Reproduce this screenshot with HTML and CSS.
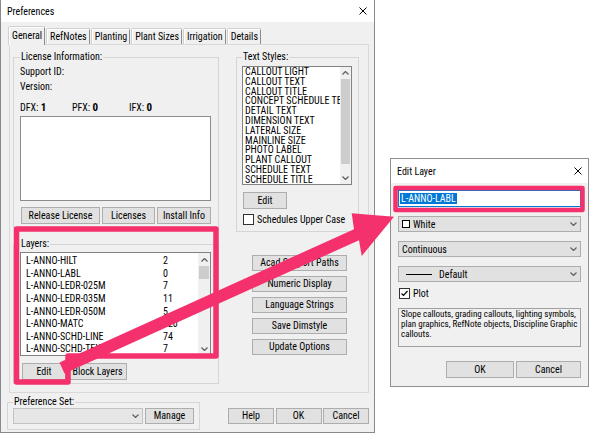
FILE: index.html
```html
<!DOCTYPE html>
<html lang="en">
<head>
<meta charset="utf-8">
<title>Preferences</title>
<link rel="stylesheet" href="styles.css">
</head>
<body>
<div class="desktop">
  <section class="win prefs">
    <header class="titlebar">
      <span class="title">Preferences</span>
      <svg class="close" width="8" height="8" viewBox="0 0 8 8"><path d="M0.5 0.5L7.5 7.5M7.5 0.5L0.5 7.5" stroke="#000" stroke-width="1" fill="none"/></svg>
    </header>
    <div class="client">
      <nav class="tabs">
        <span class="tab active">General</span>
        <span class="tab">RefNotes</span>
        <span class="tab">Planting</span>
        <span class="tab">Plant Sizes</span>
        <span class="tab">Irrigation</span>
        <span class="tab">Details</span>
      </nav>
      <div class="panel">
        <div class="col col-left">
          <fieldset class="group license">
            <legend>License Information:</legend>
            <div class="info">Support ID:</div>
            <div class="info">Version:</div>
            <div class="counts">
              <span>DFX: <b>1</b></span>
              <span>PFX: <b>0</b></span>
              <span>IFX: <b>0</b></span>
            </div>
            <div class="textbox"></div>
            <div class="btnrow">
              <button class="btn b-release">Release License</button>
              <button class="btn b-licenses">Licenses</button>
              <button class="btn b-install">Install Info</button>
            </div>
          </fieldset>
          <fieldset class="group layers">
            <legend>Layers:</legend>
            <div class="listbox layerlist">
              <div class="items">
                <div class="row"><span>L-ANNO-HILT</span><span>2</span></div>
                <div class="row"><span>L-ANNO-LABL</span><span>0</span></div>
                <div class="row"><span>L-ANNO-LEDR-025M</span><span>7</span></div>
                <div class="row"><span>L-ANNO-LEDR-035M</span><span>11</span></div>
                <div class="row"><span>L-ANNO-LEDR-050M</span><span>5</span></div>
                <div class="row"><span>L-ANNO-MATC</span><span>120</span></div>
                <div class="row"><span>L-ANNO-SCHD-LINE</span><span>74</span></div>
                <div class="row"><span>L-ANNO-SCHD-TEXT</span><span>7</span></div>
              </div>
              <div class="vscroll">
                <div class="arr"><svg width="7" height="4" viewBox="0 0 7 4"><path d="M0.5 3.5L3.5 0.5L6.5 3.5" stroke="#606060" stroke-width="1.3" fill="none"/></svg></div>
                <div class="track"><div class="thumb"></div></div>
                <div class="arr"><svg width="7" height="4" viewBox="0 0 7 4"><path d="M0.5 0.5L3.5 3.5L6.5 0.5" stroke="#606060" stroke-width="1.3" fill="none"/></svg></div>
              </div>
            </div>
            <div class="btnrow">
              <button class="btn b-edit">Edit</button>
              <button class="btn b-block">Block Layers</button>
            </div>
          </fieldset>
        </div>
        <div class="col col-right">
          <fieldset class="group styles">
            <legend>Text Styles:</legend>
            <div class="listbox stylelist">
              <div class="items">
                <div class="item">CALLOUT LIGHT</div>
                <div class="item">CALLOUT TEXT</div>
                <div class="item">CALLOUT TITLE</div>
                <div class="item">CONCEPT SCHEDULE TEXT</div>
                <div class="item">DETAIL TEXT</div>
                <div class="item">DIMENSION TEXT</div>
                <div class="item">LATERAL SIZE</div>
                <div class="item">MAINLINE SIZE</div>
                <div class="item">PHOTO LABEL</div>
                <div class="item">PLANT CALLOUT</div>
                <div class="item">SCHEDULE TEXT</div>
                <div class="item">SCHEDULE TITLE</div>
              </div>
              <div class="vscroll">
                <div class="arr"><svg width="7" height="4" viewBox="0 0 7 4"><path d="M0.5 3.5L3.5 0.5L6.5 3.5" stroke="#606060" stroke-width="1.3" fill="none"/></svg></div>
                <div class="track"><div class="thumb"></div></div>
                <div class="arr"><svg width="7" height="4" viewBox="0 0 7 4"><path d="M0.5 0.5L3.5 3.5L6.5 0.5" stroke="#606060" stroke-width="1.3" fill="none"/></svg></div>
              </div>
            </div>
            <button class="btn b-edit s-edit">Edit</button>
            <label class="checkrow upper"><span class="chk"></span>Schedules Upper Case</label>
          </fieldset>
          <div class="btncol">
            <button class="btn b-side">Acad Support Paths</button>
            <button class="btn b-side">Numeric Display</button>
            <button class="btn b-side">Language Strings</button>
            <button class="btn b-side">Save Dimstyle</button>
            <button class="btn b-side">Update Options</button>
          </div>
        </div>
      </div>
      <div class="footer">
        <fieldset class="group prefset">
          <legend>Preference Set:</legend>
          <div class="setrow">
            <div class="combo c-set"><svg class="chev" width="7" height="4" viewBox="0 0 7 4"><path d="M0.5 0.5L3.5 3.5L6.5 0.5" stroke="#606060" stroke-width="1.2" fill="none"/></svg></div>
            <button class="btn b-manage">Manage</button>
          </div>
        </fieldset>
        <div class="dlgbtns">
          <button class="btn b-dlg">Help</button>
          <button class="btn b-dlg">OK</button>
          <button class="btn b-dlg">Cancel</button>
        </div>
      </div>
    </div>
  </section>

  <section class="win editlayer">
    <header class="titlebar">
      <span class="title">Edit Layer</span>
      <svg class="close" width="8" height="8" viewBox="0 0 8 8"><path d="M0.5 0.5L7.5 7.5M7.5 0.5L0.5 7.5" stroke="#000" stroke-width="1" fill="none"/></svg>
    </header>
    <div class="dlgbody">
      <div class="field"><span class="sel">L-ANNO-LABL</span></div>
      <div class="combo c-layer"><span class="swatch"></span><span class="ctext">White</span><svg class="chev" width="7" height="4" viewBox="0 0 7 4"><path d="M0.5 0.5L3.5 3.5L6.5 0.5" stroke="#606060" stroke-width="1.2" fill="none"/></svg></div>
      <div class="combo c-layer"><span>Continuous</span><svg class="chev" width="7" height="4" viewBox="0 0 7 4"><path d="M0.5 0.5L3.5 3.5L6.5 0.5" stroke="#606060" stroke-width="1.2" fill="none"/></svg></div>
      <div class="combo c-layer"><span class="lw"></span><span class="ctext dflt">Default</span><svg class="chev" width="7" height="4" viewBox="0 0 7 4"><path d="M0.5 0.5L3.5 3.5L6.5 0.5" stroke="#606060" stroke-width="1.2" fill="none"/></svg></div>
      <label class="checkrow plot"><span class="chk"><svg width="9" height="9" viewBox="0 0 9 9"><path d="M1.5 4.5L3.5 6.5L7.5 2" stroke="#000" stroke-width="1.2" fill="none"/></svg></span>Plot</label>
      <div class="desc">Slope callouts, grading callouts, lighting symbols,<br>plan graphics, RefNote objects, Discipline Graphic<br>callouts.</div>
      <div class="okrow">
        <button class="btn b-ok">OK</button>
        <button class="btn b-cancel">Cancel</button>
      </div>
    </div>
  </section>

  <svg class="callouts" width="589" height="434" viewBox="0 0 589 434">
    <path d="M16.5 229H216V356H68V382H16.5Z" fill="none" stroke="#f4306d" stroke-width="5.5" stroke-linejoin="round"/>
    <rect x="395.5" y="188" width="187" height="22" fill="none" stroke="#f4306d" stroke-width="4.5" stroke-linejoin="round"/>
    <polygon points="59.5,362.5 354,229.2 351.7,213.3 394,216.7 361.7,256 359,240.2 64.5,373.5" fill="#f4306d"/>
  </svg>
</div>
</body>
</html>
```

FILE: styles.css
```css
* { box-sizing: border-box; }
html, body { margin: 0; padding: 0; }
body {
  width: 589px;
  height: 434px;
  overflow: hidden;
  background: #fff;
  font-family: "Roboto Condensed", "Liberation Sans Narrow", "Arial Narrow", Roboto, "Liberation Sans", sans-serif;
  font-stretch: 75%;
  font-size: 10px;
  color: #000;
}
.desktop { position: relative; width: 589px; height: 434px; }

.win {
  position: absolute;
  display: flex;
  flex-direction: column;
  background: #f0f0f0;
  white-space: nowrap;
}
.titlebar {
  flex: none;
  display: flex;
  align-items: center;
  justify-content: space-between;
  background: #fff;
}
.close { display: block; }

/* ---------- Preferences window ---------- */
.prefs {
  left: 0;
  top: 0;
  width: 375px;
  height: 433px;
  border: 1px solid #8a8a8a;
  border-top: 0;
}
.prefs .titlebar { height: 22px; padding: 0 7px 0 6px; }
.prefs .title { font-size: 10px; }

.client { flex: 1; display: flex; flex-direction: column; padding-top: 5px; }

.tabs {
  display: flex;
  align-items: flex-end;
  gap: 2px;
  height: 17px;
  margin-left: 8px;
  position: relative;
  z-index: 1;
}
.tab {
  height: 15px;
  line-height: 13px;
  padding: 0 2px;
  border: 1px solid;
  border-color: #fff #8c8c8c transparent #fff;
  border-bottom: 0;
  background: #f0f0f0;
  box-shadow: -1px 0 0 #d0d0d0, 0 -1px 0 #d0d0d0;
}
.tab.active { height: 18px; line-height: 15px; margin-bottom: -1px; }

.panel {
  margin-left: 8px;
  width: 360px;
  height: 349px;
  border: 1px solid #d9d9d9;
  display: flex;
  gap: 17px;
  padding: 6px 0 0 3px;
}
.col { display: flex; flex-direction: column; }
.col-left { width: 206px; }
.col-right { width: 123px; }

fieldset.group {
  margin: 0;
  border: 1px solid #d5d5d5;
  min-width: 0;
}
legend { padding: 0 1px; line-height: 12px; }

fieldset.license { padding: 1px 7px 3px 6px; }
.info { line-height: 15px; }
.counts {
  margin-top: 7px;
  line-height: 14px;
  display: grid;
  grid-template-columns: 52px 57px auto;
}
.counts b { font-size: 11px; }
.textbox {
  margin-top: 1px;
  height: 85px;
  border: 1px solid #8c8c8c;
  background: #fff;
}
.btnrow { display: flex; gap: 2px; }
.license .btnrow { margin-top: 6px; margin-left: 1px; }

.btn {
  font: inherit;
  color: #000;
  height: 17px;
  padding: 0;
  line-height: 15px;
  text-align: center;
  border: 1px solid #adadad;
  background: #e1e1e1;
  white-space: nowrap;
  flex: none;
}
.b-release { width: 79px; }
.b-licenses { width: 53px; }
.b-install { width: 54px; }
.b-edit { width: 44px; }
.b-block { width: 59px; }

fieldset.layers { margin-top: 10px; padding: 2px 7px 3px 6px; }
.layers .btnrow { margin-top: 7px; margin-left: 2px; }

.listbox {
  display: flex;
  border: 1px solid #828282;
  background: #fff;
  overflow: hidden;
}
.items { flex: 1; overflow: hidden; min-width: 0; }
.layerlist { height: 104px; }
.layerlist .items { padding: 2px 0 0 5px; }
.row {
  display: grid;
  grid-template-columns: 137px auto;
  height: 12.65px;
  line-height: 12.65px;
}
.vscroll {
  flex: none;
  display: flex;
  flex-direction: column;
  background: #f0f0f0;
}
.arr {
  flex: none;
  height: 13px;
  display: flex;
  align-items: center;
  justify-content: center;
}
.arr svg { display: block; }
.track { flex: 1; }
.thumb { background: #cdcdcd; margin: 0 1px; }
.layerlist .vscroll { width: 12px; }
.layerlist .thumb { height: 13px; }

fieldset.styles { padding: 3px 6px 5px 5px; }
.stylelist { height: 119px; }
.stylelist .items { padding-left: 2px; }
.item { height: 9.8px; line-height: 9.8px; }
.stylelist .vscroll { width: 11px; }
.stylelist .arr { height: 12px; }
.stylelist .thumb { height: 85px; }
.s-edit { margin-top: 7px; margin-left: 1px; }

.checkrow { display: flex; align-items: center; gap: 3px; height: 13px; }
.chk {
  width: 11px;
  height: 11px;
  border: 1px solid #333;
  background: #fff;
  display: flex;
  align-items: center;
  justify-content: center;
  flex: none;
}
.chk svg { display: block; }
.upper { margin-top: 4px; margin-left: 1px; }

.btncol {
  margin-top: 23px;
  margin-left: 16px;
  display: flex;
  flex-direction: column;
  gap: 5px;
}
.b-side { width: 95px; height: 16px; line-height: 14px; }

.footer { display: flex; margin-top: 3px; }
fieldset.prefset { margin-left: 6px; width: 193px; padding: 0 5px 5px 5px; }
.setrow { display: flex; gap: 2px; }
.combo {
  display: flex;
  align-items: center;
  height: 16px;
  border: 1px solid #adadad;
  background: #e1e1e1;
  padding-left: 3px;
}
.chev { display: block; margin-left: auto; margin-right: 3px; flex: none; }
.c-set { width: 130px; background: #e6e6e6; border-color: #c2c2c2; }
.b-manage { width: 49px; height: 16px; line-height: 14px; }
.dlgbtns { display: flex; gap: 1.5px; margin-left: 28px; padding-top: 12px; }
.b-dlg { width: 46px; height: 16px; line-height: 14px; }

/* ---------- Edit Layer dialog ---------- */
.editlayer {
  left: 390px;
  top: 158px;
  width: 199px;
  height: 229px;
  border: 1px solid #8f8f8f;
}
.editlayer .titlebar { height: 24px; padding: 0 6px 0 6px; }
.dlgbody { flex: 1; display: flex; flex-direction: column; padding: 7px 7px 0 7px; }
.field {
  height: 17px;
  border: 1px solid #0078d7;
  background: #fff;
  padding: 2px 1px 0 1px;
}
.sel {
  display: inline-block;
  background: #0078d7;
  color: #fff;
  line-height: 11px;
  padding: 0 1px;
}
.c-layer { margin-top: 9px; }
.swatch {
  width: 8px;
  height: 8px;
  border: 1px solid #000;
  background: #fff;
  flex: none;
}
.ctext { margin-left: 3px; }
.lw { width: 26px; height: 1px; background: #000; margin-left: 4px; flex: none; }
.dflt { margin-left: 7px; }
.plot { margin-top: 5px; margin-left: 1px; }
.desc {
  margin-top: 8px;
  height: 39px;
  border: 1px solid #a0a0a0;
  background: #f0f0f0;
  padding: 0 1px 0 2px;
  font-size: 9px;
  line-height: 10px;
  overflow: hidden;
}
.okrow { margin-top: 14px; display: flex; justify-content: flex-end; gap: 2px; }
.b-ok { width: 68px; }
.b-cancel { width: 65px; }

/* ---------- annotation overlay ---------- */
.callouts {
  position: absolute;
  left: 0;
  top: 0;
  z-index: 10;
  pointer-events: none;
}
```
